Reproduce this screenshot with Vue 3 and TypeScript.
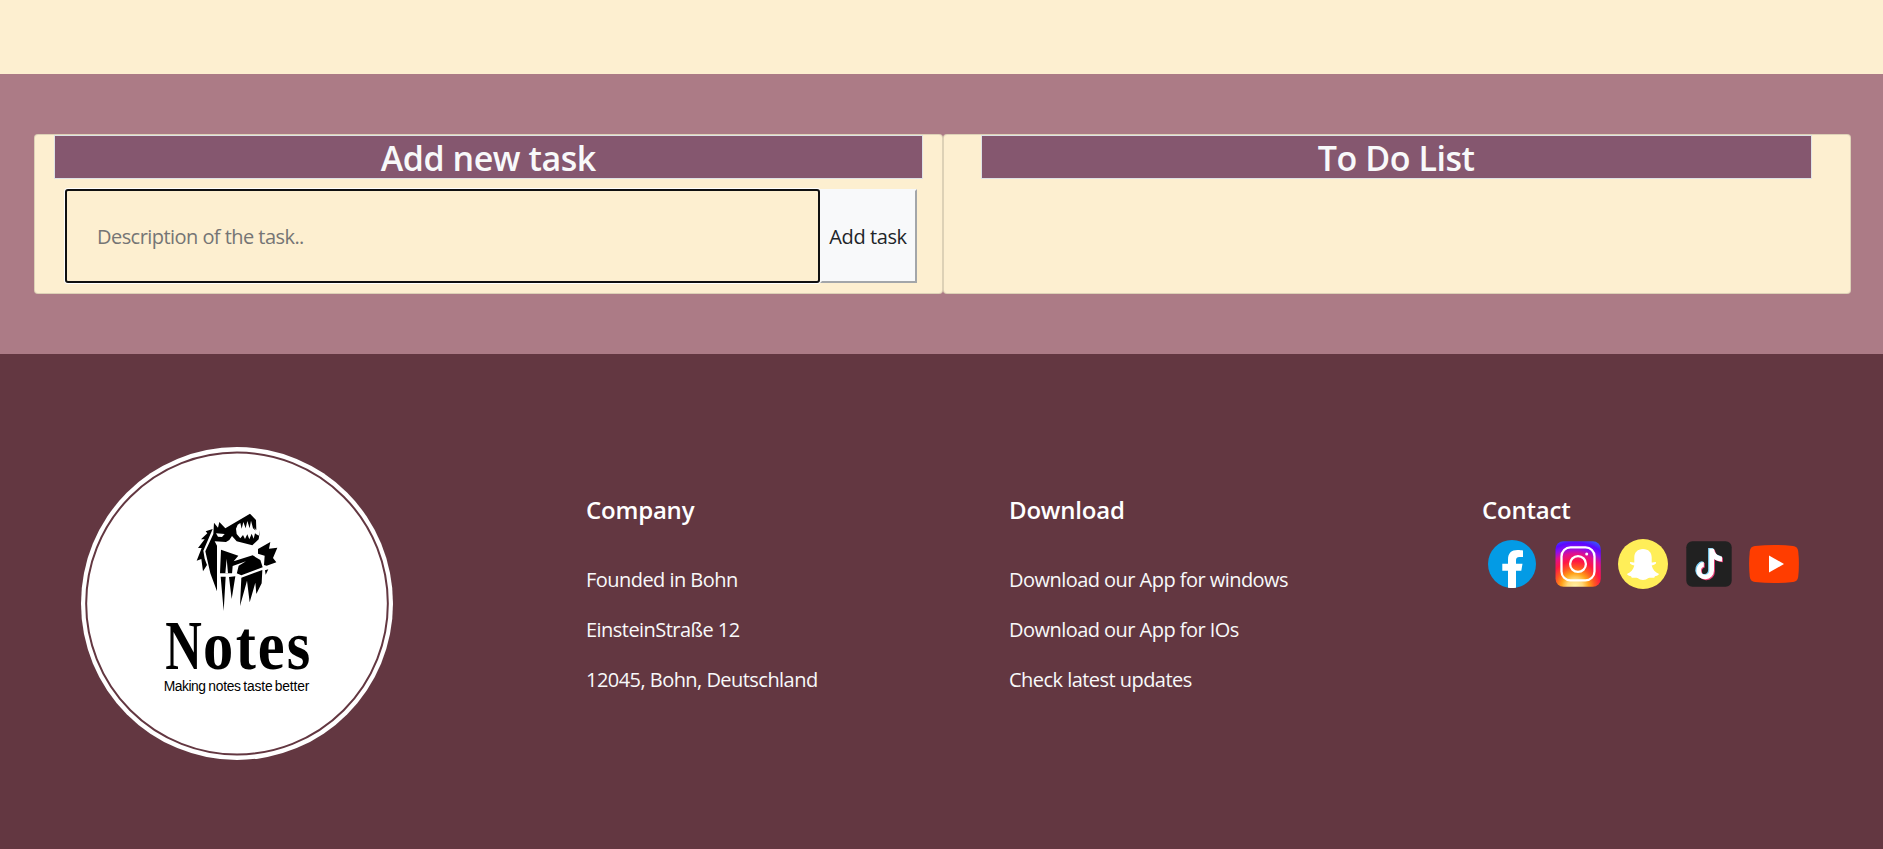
<script setup lang="ts">
import { ref } from 'vue'

interface FooterColumn {
  key: string
  title: string
  lines: string[]
}

const description = ref<string>('')
const tasks = ref<string[]>([])

const columns: FooterColumn[] = [
  { key: 'company', title: 'Company', lines: ['Founded in Bohn', 'EinsteinStraße 12', '12045, Bohn, Deutschland'] },
  { key: 'download', title: 'Download', lines: ['Download our App for windows', 'Download our App for IOs', 'Check latest updates'] },
]

const tiktokNote =
  'M30.3 14.8H35c.5 4.400 3.600 7.400 8 7.800V27.400c-3 0-5.800-1-8-2.500V36.500a8.800 8.800 0 1 1-10.200-8.700v4.900a4.100 4.100 0 1 0 5.500 3.900z'

function addTask(): void {
  const text = description.value.trim()
  if (!text) return
  tasks.value.push(text)
  description.value = ''
}
</script>

<template>
  <div class="page">
    <div class="top-band"></div>

    <main class="board">
      <section class="card card-add">
        <h2 class="card-title">Add new task</h2>
        <form class="task-form" @submit.prevent="addTask">
          <input v-model="description" class="task-input" type="text" placeholder="Description of the task.." />
          <button class="task-button" type="submit">Add task</button>
        </form>
      </section>
      <section class="card card-list">
        <h2 class="card-title">To Do List</h2>
        <p v-for="(task, i) in tasks" :key="i" class="task">{{ task }}</p>
      </section>
    </main>

    <footer class="footer">
      <svg class="logo" viewBox="0 0 1020 1020">
        <ellipse cx="501" cy="520.5" rx="468" ry="469.5" fill="#fff" />
        <ellipse cx="501" cy="520.5" rx="452.5" ry="453" fill="none" stroke="#633741" stroke-width="6" />
        <g fill="#000">
          <path d="M428 297L407 304L412 310L393 328L404 328L384 354L395 354L380 392L394 387L399 424L411 405L404 386L400 362Z" />
          <path d="M432 278L444 293L448 276L466 295L540 251L558 270L559 300L552 292L566 318L570 300L566 328L547 346L500 334L486 318L478 330L468 336L434 334L441 347L441 484L421 430L406 364L430 312Z" />
          <path d="M453 359L505 377L491 394L548 376L571 390L578 412L514 436L500 430L474 430L450 430Z" />
          <path d="M452 440H467L461 543ZM477 441L496 439L485 507ZM514 443L577 420L575 460L559 492L556 458L539 517L531 452L510 528Z" />
          <path d="M564 357L601 336L597 356L622 353L609 384L619 397L590 407L582 405L584 377L564 371ZM585 421L595 418L587 434Z" />
        </g>
        <g fill="#fff">
          <path d="M438 310L464 312L456 321L444 320Z" />
          <path d="M503 284L511 279L515 296L520 276L527 295L532 273L539 295L543 272L549 295L555 300L567 304L563 316L555 310L551 326L545 311L538 328L532 313L525 327L519 315L511 325L500 312L498 296Z" />
          <path d="M470 386L474 430H466ZM488 408L528 394L506 407L500 432H486Z" />
        </g>
        <g font-family="'Liberation Serif', serif" font-weight="700" font-size="211">
          <text y="717" x="397" transform="scale(.72 1)">N</text>
          <text y="717" x="464 578 655 756" transform="scale(.86 1)">otes</text>
        </g>
        <text y="783" font-family="'Liberation Sans', sans-serif" font-size="41.5">
          <tspan x="281" textLength="127">Making</tspan>
          <tspan x="415" textLength="98">notes</tspan>
          <tspan x="520" textLength="88">taste</tspan>
          <tspan x="614" textLength="104">better</tspan>
        </text>
      </svg>

      <section v-for="column in columns" :key="column.key" class="column" :class="column.key">
        <h4 class="column-title">{{ column.title }}</h4>
        <p v-for="line in column.lines" :key="line" class="column-line">{{ line }}</p>
      </section>

      <section class="column contact">
        <h4 class="column-title">Contact</h4>
        <div class="social">
          <svg viewBox="0 0 60 60">
            <circle cx="30" cy="30" r="24" fill="#039be5" />
            <path fill="#fff" d="M26 54V36.7H20.3V29.7H26V25.5C26 19 29.5 16 35.5 16C38 16 39.7 16.2 41 16.5V23H37.5C34.7 23 34 24.2 34 26.5V29.7H40.5L39.3 36.7H34V53.7Q30 54.4 26 53.7Z" />
          </svg>
          <svg viewBox="0 0 60 60">
            <defs>
              <radialGradient id="insta" gradientUnits="userSpaceOnUse" cx="27" cy="53" r="49">
                <stop offset="0" stop-color="#fff3a8" />
                <stop offset=".16" stop-color="#ffd978" />
                <stop offset=".28" stop-color="#ffa21a" />
                <stop offset=".4" stop-color="#ff5722" />
                <stop offset=".53" stop-color="#ff1744" />
                <stop offset=".68" stop-color="#e0108e" />
                <stop offset=".8" stop-color="#8b0ff0" />
                <stop offset=".9" stop-color="#5a08ff" />
                <stop offset="1" stop-color="#3a50fa" />
              </radialGradient>
            </defs>
            <rect x="7.5" y="7.2" width="45.3" height="45.6" rx="8" fill="url(#insta)" />
            <g fill="none" stroke="#fff" stroke-width="2.3">
              <rect x="13.5" y="13.4" width="33" height="33" rx="9" />
              <circle cx="30" cy="30" r="7.9" />
            </g>
            <circle cx="38.7" cy="20" r="1.5" fill="#fff" />
          </svg>
          <svg viewBox="0 0 60 60">
            <circle cx="30" cy="30" r="25" fill="#ffee58" />
            <path fill="#fff" d="M30 15C24.5 15 21.3 18.5 21.3 23.5V28.5C19.5 28.8 17.5 27.6 17 28.4C16.6 29.6 19 31 21.3 31.5C20.5 35.5 17.5 38.5 14.3 39.8C13.5 40.4 15 41.8 18 42.3L18.8 43.7C20.5 44 22.5 43.3 24.5 44C26.5 45 27.5 46 30 46C32.5 46 33.5 45 35.5 44C37.5 43.3 39.5 44 41.2 43.7L42 42.3C45 41.8 46.5 40.4 45.7 39.8C42.5 38.5 39.5 35.5 38.7 31.5C41 31 43.4 29.6 43 28.4C42.5 27.6 40.5 28.8 38.7 28.5V23.5C38.7 18.5 35.5 15 30 15Z" />
          </svg>
          <svg viewBox="0 0 60 60">
            <rect x="7.3" y="7.3" width="45.4" height="45.4" rx="6" fill="#212121" />
            <path :d="tiktokNote" fill="#ec407a" transform="translate(.9 .9)" />
            <path :d="tiktokNote" fill="#81d4fa" transform="translate(-1.2 -.7)" />
            <path :d="tiktokNote" fill="#fff" />
          </svg>
          <svg viewBox="0 0 60 60">
            <path fill="#ff3d00" d="M11 12Q30 10 49 12Q53.5 12.5 54.2 17Q55.6 30 54.2 43Q53.5 47.5 49 48Q30 50 11 48Q6.5 47.5 5.8 43Q4.4 30 5.8 17Q6.5 12.5 11 12Z" />
            <path fill="#fff" d="M25 21.4V38.5L40 30Z" />
          </svg>
        </div>
      </section>
    </footer>
  </div>
</template>

<style>
body {
  margin: 0;
  overflow: hidden;
}
</style>

<style scoped>
.page {
  box-sizing: border-box;
  height: 849px;
  overflow: hidden;
  display: flex;
  flex-direction: column;
  background: #633741;
  font-family: 'Open Sans', 'Noto Sans', sans-serif;
  font-size: 20px;
  line-height: 30px;
}
.page * {
  box-sizing: border-box;
}
.top-band {
  flex: 0 0 74px;
  background: #fdefd0;
}
.board {
  flex: 0 0 280px;
  display: grid;
  grid-template-columns: 1fr 1fr;
  padding: 60px 32px 60px 34px;
  background: #ac7b86;
}
.card {
  border: 1px solid rgba(0, 0, 0, 0.125);
  border-radius: 4px;
  background: #fdefd0;
}
.card-add {
  padding: 0 19px;
}
.card-list {
  padding: 0 38px 0 37px;
}
.card-title {
  height: 44px;
  margin: 0;
  border: 1px solid #dee2e6;
  background: #85576f;
  color: #f8f9fa;
  font-size: 34px;
  font-weight: 600;
  line-height: 44px;
  letter-spacing: -0.45px;
  text-align: center;
}
.task-form {
  display: flex;
  margin: 10px 6px 0 11px;
}
.task-input {
  flex: 1;
  min-width: 0;
  height: 94px;
  padding: 0 30px;
  border: 2px solid #101010;
  border-radius: 3px;
  outline: none;
  box-shadow: 0 0 0 1px #fff;
  background: #fdefd0;
  font: inherit;
  letter-spacing: -0.55px;
  color: #212529;
}
.task-input::placeholder {
  color: #757575;
  opacity: 1;
}
.task-button {
  width: 97px;
  height: 94px;
  padding: 2px 0 0;
  border: 2px solid;
  border-color: #f8f9fa #a3a6a9 #a3a6a9 #f8f9fa;
  background: #f8f9fa;
  color: #212529;
  font: inherit;
  letter-spacing: -0.4px;
  white-space: nowrap;
}
.task {
  margin: 8px 0 0;
}
.footer {
  flex: 1;
  display: grid;
  grid-template-columns: 516px 423px 473px 1fr;
  padding: 76px 0 0 70px;
  color: #f8f9fa;
}
.logo {
  width: 340px;
  height: 340px;
}
.column {
  padding-top: 62px;
  white-space: nowrap;
}
.column-title {
  margin: 0 0 37px;
  color: #fff;
  font-size: 24px;
  font-weight: 600;
  line-height: 36px;
  letter-spacing: -0.2px;
}
.column-line {
  margin: 0 0 20px;
  letter-spacing: -0.54px;
}
.contact .column-title {
  margin-bottom: 6px;
}
.social {
  display: flex;
  gap: 5.5px;
}
.social svg {
  flex: none;
  width: 60px;
  height: 60px;
}
</style>
